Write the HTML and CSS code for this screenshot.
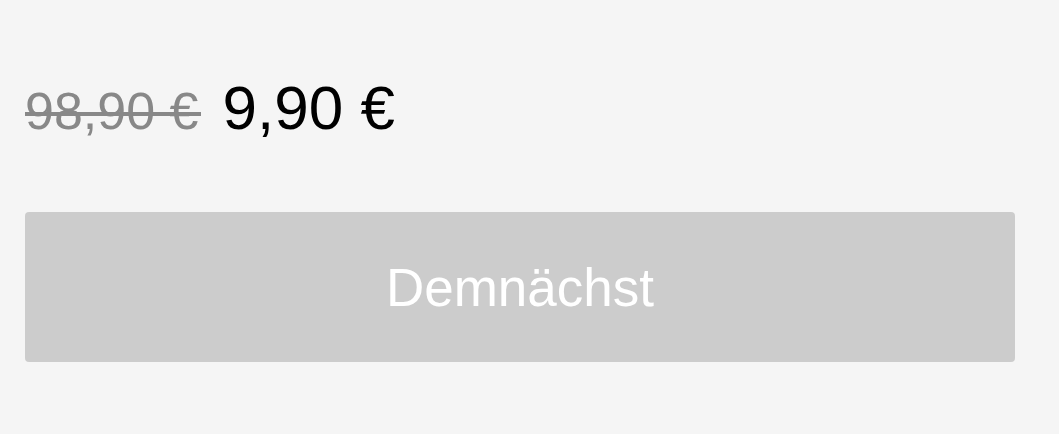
FILE: index.html
```html
<!DOCTYPE html>
<html lang="de">
<head>
  <meta charset="UTF-8">
  <title>Preis</title>
  <link rel="stylesheet" href="styles.css">
</head>
<body>
  <div class="product">
    <div class="price">
      <span class="price-old">98,90 €</span>
      <span class="price-new">9,90 €</span>
    </div>
    <button class="buy" disabled>Demnächst</button>
  </div>
</body>
</html>
```

FILE: styles.css
```css
body {
  margin: 0;
  background-color: #f5f5f5;
  font-family: "Liberation Sans", Arial, sans-serif;
}

.product {
  width: 990px;
  padding: 78px 0 0 25px;
}

.price {
  display: flex;
  align-items: baseline;
  gap: 22px;
  line-height: 60px;
}

/* strike drawn as a background so it sits a bit below the middle */
.price-old {
  font-size: 52px;
  color: #888;
  padding-right: 2px;
  background: linear-gradient(#888, #888) no-repeat 0 31px / 100% 4px;
}

.price-new {
  font-size: 62px;
  color: #000;
}

.buy {
  display: block;
  width: 100%;
  height: 150px;
  margin-top: 71px;
  border: none;
  border-radius: 4px;
  background-color: #ccc;
  color: #fff;
  font-family: inherit;
  font-size: 53px;
}
```
